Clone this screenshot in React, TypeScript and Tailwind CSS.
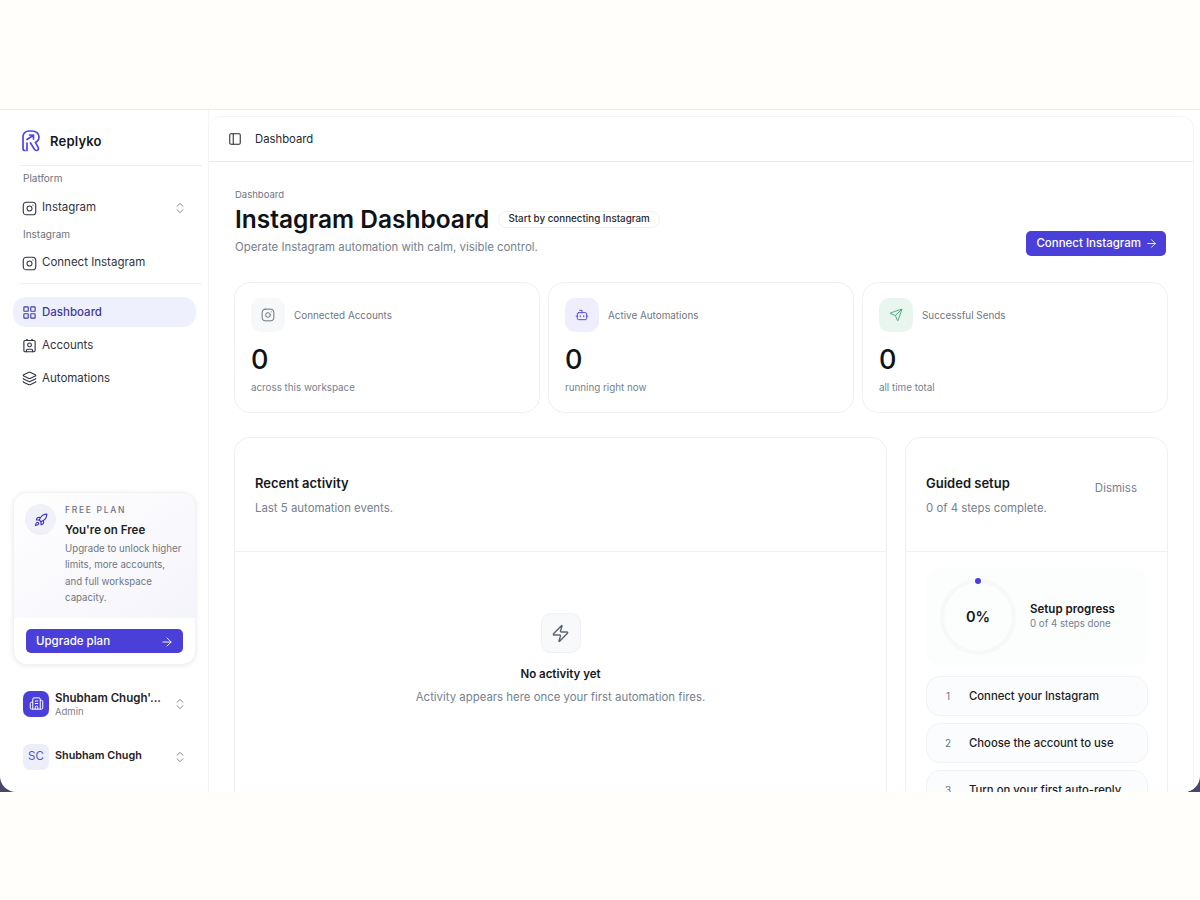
import { ArrowRight, Bot, Building2, ChevronsUpDown, Contact, Instagram, Layers, LayoutGrid, PanelLeft, Rocket, Send, Zap } from 'lucide-react';

const font = { fontFamily: 'Inter, sans-serif' };

function ReplykoLogo() {
	return (
		<svg width="18" height="22" viewBox="0 0 18 22" fill="none" stroke="#4f46e5" strokeWidth="1.7" strokeLinecap="round" strokeLinejoin="round">
			<path d="M3 20.5c-1.2 0-2-.8-2-2V6.5C1 3.2 3.6 1 6.8 1h3.4C14 1 17 3.6 17 7c0 2.6-1.4 4.4-3.6 5.3l2.8 5c.8 1.500-.2 3.200-1.800 3.200-.9 0-1.500-.4-2-1.300L8.500 13" />
			<path d="M5 20.500V13" />
			<path d="M5 9.500l6-4M7.500 5h4v4" />
		</svg>
	);
}

// ─── Sidebar ──────────────────────────────────────────────────────────────────

function NavRow({ icon, label, active }: { icon: React.ReactNode; label: string; active?: boolean }) {
	return (
		<div
			className={`flex items-center gap-[5px] h-[30px] pt-[1px] pl-[9px] mr-[12px] rounded-[13px] text-[11.5px] ${
				active ? 'bg-[#eff0fd] text-[#3f3a9e] font-medium' : 'text-[#30343f]'
			}`}
		>
			{icon}
			{label}
		</div>
	);
}

function Sidebar() {
	return (
		<aside className="w-[209px] shrink-0 flex flex-col pl-[13px] border-r border-[#f3f4f6]">
			<div className="flex items-start gap-[10px] h-[55px] pt-[20px] ml-[9px]">
				<ReplykoLogo />
				<span className="text-[13px] leading-[22px] font-semibold text-[#16181d] tracking-[0.2px]">Replyko</span>
			</div>
			<div className="h-px bg-[#eceef1] ml-[6px] mr-[6px]" />
			<div className="text-[10px] text-[#6b7280] ml-[10px] mt-[6px] leading-[12px]">Platform</div>
			<div className="flex items-center gap-[5px] ml-[9px] mt-[14px] h-[20px] text-[11.5px] text-[#30343f]">
				<Instagram size={15} strokeWidth={1.8} />
				<span className="flex-1">Instagram</span>
				<ChevronsUpDown size={14} strokeWidth={1.5} className="mr-[21px] text-[#6b7280]" />
			</div>
			<div className="text-[10px] text-[#6b7280] ml-[10px] mt-[10px] leading-[12px]">Instagram</div>
			<div className="flex items-center gap-[5px] ml-[9px] mt-[13px] h-[20px] text-[11.5px] text-[#30343f]">
				<Instagram size={15} strokeWidth={1.8} />
				Connect Instagram
			</div>
			<div className="h-px bg-[#f1f2f4] ml-[6px] mr-[6px] mt-[10px]" />
			<div className="flex flex-col gap-[3px] mt-[13px]">
				<NavRow active icon={<LayoutGrid size={15} strokeWidth={1.8} />} label="Dashboard" />
				<NavRow icon={<Contact size={15} strokeWidth={1.8} />} label="Accounts" />
				<NavRow icon={<Layers size={15} strokeWidth={1.8} />} label="Automations" />
			</div>

			<div className="mt-[99px] mr-[12px] rounded-[14px] bg-white border border-[#f1f2f5] shadow-[0_1px_5px_rgba(30,30,60,0.09)] overflow-hidden">
				<div className="flex gap-[9px] pl-[11px] pt-[11px] h-[125px] bg-gradient-to-br from-white to-[#f4f4fb]">
					<div className="w-[31px] h-[31px] shrink-0 rounded-full bg-[#eff0f8] flex items-center justify-center">
						<Rocket size={14} className="text-[#4338ca]" />
					</div>
					<div className="w-[119px] shrink-0">
						<div className="text-[8.5px] font-medium tracking-[0.2em] text-[#6b7280] leading-[13px]">FREE PLAN</div>
						<div className="text-[11.5px] font-semibold text-[#1c1e26] mt-[5px] leading-[16px] whitespace-nowrap">You&apos;re on Free</div>
						<div className="text-[9.7px] text-[#71767f] leading-[16.4px] mt-[3px]">
							Upgrade to unlock higher limits, more accounts, and full workspace capacity.
						</div>
					</div>
				</div>
				<div className="px-[12px] pt-[11px] pb-[11px]">
					<div className="h-[24px] pt-[1px] rounded-[5px] bg-[#4a3fd9] text-white text-[11.5px] font-medium flex items-center justify-between pl-[10px] pr-[9px]">
						Upgrade plan
						<ArrowRight size={14} strokeWidth={1.6} />
					</div>
				</div>
			</div>

			<div className="flex items-center mt-[25px] ml-[10px] h-[27px]">
				<div className="w-[26px] h-[26px] rounded-[7px] bg-[#4a3fd9] flex items-center justify-center text-white">
					<Building2 size={15} strokeWidth={1.6} />
				</div>
				<div className="ml-[6px] pt-[1px] flex-1">
					<div className="text-[11.5px] font-semibold text-[#1f2128] leading-[14px]">Shubham Chugh&apos;...</div>
					<div className="text-[9.5px] text-[#7b808a] leading-[13px]">Admin</div>
				</div>
				<ChevronsUpDown size={14} strokeWidth={1.5} className="mr-[21px] text-[#6b7280]" />
			</div>
			<div className="flex items-center mt-[26px] ml-[10px] h-[27px]">
				<div className="w-[26px] h-[26px] rounded-[7px] bg-[#eceefa] flex items-center justify-center text-[11.5px] text-[#5a54c8]">SC</div>
				<div className="ml-[6px] flex-1 text-[10.8px] font-semibold text-[#1f2128]">Shubham Chugh</div>
				<ChevronsUpDown size={14} strokeWidth={1.5} className="mr-[21px] text-[#6b7280]" />
			</div>
		</aside>
	);
}

// ─── Main ─────────────────────────────────────────────────────────────────────

function StatCard({ icon, tint, label, note }: { icon: React.ReactNode; tint: string; label: string; note: string }) {
	return (
		<div className="flex-1 h-[131px] rounded-[16px] border border-[#eff0f3] pl-[16px] pt-[15px]">
			<div className="flex items-center gap-[9px]">
				<div className={`w-[34px] h-[34px] rounded-[10px] flex items-center justify-center ${tint}`}>{icon}</div>
				<span className="text-[9.9px] text-[#6f7582]">{label}</span>
			</div>
			<div className="text-[27px] font-medium text-[#101216] leading-[30px] mt-[13px]">0</div>
			<div className="text-[9.8px] text-[#76808f] mt-[6px] leading-[14px]">{note}</div>
		</div>
	);
}

function Step({ n, label }: { n: number; label: string }) {
	return (
		<div className="flex items-center h-[40px] shrink-0 rounded-[14px] border border-[#f1f2f5] bg-[#fbfcfd]">
			<div className="w-[42px] text-center text-[10px] text-[#6b7280]">{n}</div>
			<span className="text-[11.3px] font-medium text-[#1c1e26]">{label}</span>
		</div>
	);
}

function Main() {
	return (
		<main className="flex-1 min-w-0 flex flex-col mt-[6px] mr-[6px] bg-white rounded-t-[12px] border-t border-r border-[#f3f4f6]">
			<div className="flex items-center h-[45px] shrink-0 pl-[19px] gap-[13px] border-b border-[#e8e9ed] text-[11.3px] text-[#262932]">
				<PanelLeft size={14} strokeWidth={1.8} />
				Dashboard
			</div>
			<div className="pl-[25px] pr-[25px] flex-1 min-h-0 flex flex-col">
				<div className="flex items-end justify-between mt-[27px]">
					<div className="pl-[1px] pb-[1px]">
						<div className="text-[9.5px] text-[#6f7582] leading-[12px]">Dashboard</div>
						<div className="flex items-center gap-[9px] mt-[2px]">
							<h1 className="text-[24.5px] font-semibold text-[#101216] leading-[33px]">Instagram Dashboard</h1>
							<span className="h-[17px] flex items-center rounded-full border border-[#eeeff3] px-[9px] text-[9.8px] font-medium text-[#262932]">
								Start by connecting Instagram
							</span>
						</div>
						<p className="text-[11.4px] text-[#76808f] leading-[16px] mt-[3px]">Operate Instagram automation with calm, visible control.</p>
					</div>
					<div className="h-[25px] mr-[2px] flex items-center gap-[4px] rounded-[5px] bg-[#4a3fd9] text-white text-[11.5px] font-medium pl-[10px] pr-[8px]">
						Connect Instagram
						<ArrowRight size={13} strokeWidth={1.6} />
					</div>
				</div>

				<div className="flex gap-[8px] mt-[26px]">
					<StatCard tint="bg-[#f7f8fa]" icon={<Instagram size={14} strokeWidth={1.7} className="text-[#6b7280]" />} label="Connected Accounts" note="across this workspace" />
					<StatCard tint="bg-[#efeefc]" icon={<Bot size={14} strokeWidth={1.7} className="text-[#4f46e5]" />} label="Active Automations" note="running right now" />
					<StatCard tint="bg-[#e9f6f0]" icon={<Send size={14} strokeWidth={1.7} className="text-[#4fae85]" />} label="Successful Sends" note="all time total" />
				</div>

				<div className="flex gap-[18px] mt-[24px] flex-1 min-h-0">
					<section className="flex-1 min-w-0 rounded-t-[16px] border border-b-0 border-[#eff0f3] flex flex-col">
						<div className="h-[114px] shrink-0 border-b border-[#eff0f3] pl-[20px] pt-[36px]">
							<h2 className="text-[13px] font-semibold text-[#16181d] leading-[18px]">Recent activity</h2>
							<p className="text-[11.4px] text-[#76808f] mt-[9px] leading-[14px]">Last 5 automation events.</p>
						</div>
						<div className="flex flex-col items-center pt-[61px]">
							<div className="w-[40px] h-[40px] rounded-[10px] bg-[#f8f9fb] border border-[#f0f1f4] flex items-center justify-center">
								<Zap size={19} strokeWidth={1.8} className="text-[#5d6472]" />
							</div>
							<div className="text-[11.5px] font-semibold text-[#16181d] mt-[14px] leading-[14px]">No activity yet</div>
							<div className="text-[11.4px] text-[#76808f] mt-[9px] leading-[14px]">Activity appears here once your first automation fires.</div>
						</div>
					</section>

					<section className="w-[263px] shrink-0 rounded-t-[16px] border border-b-0 border-[#eff0f3] flex flex-col overflow-hidden">
						<div className="h-[114px] shrink-0 border-b border-[#eff0f3] pl-[20px] pr-[30px] pt-[36px]">
							<div className="flex justify-between items-start">
								<h2 className="text-[13px] font-semibold text-[#16181d] leading-[18px]">Guided setup</h2>
								<span className="text-[11.5px] text-[#76808f] mt-[7px] leading-[14px]">Dismiss</span>
							</div>
							<p className="text-[11.4px] text-[#76808f] mt-[6px] leading-[14px]">0 of 4 steps complete.</p>
						</div>
						<div className="flex flex-col gap-[7px] pl-[20px] pr-[19px] pt-[16px]">
							<div className="flex items-center h-[97px] shrink-0 rounded-[14px] bg-[#fcfdfd] mb-[4px]">
								<svg width="80" height="80" viewBox="0 0 80 80" className="ml-[12px] shrink-0">
									<circle cx="40" cy="40" r="36" fill="none" stroke="#f7f8f9" strokeWidth="4" />
									<circle cx="40" cy="4" r="3" fill="#4a3fd9" />
									<text x="40" y="45" textAnchor="middle" fontSize="14.5" fontWeight="600" fill="#16181d">0%</text>
								</svg>
								<div className="ml-[12px]">
									<div className="text-[11.5px] font-semibold text-[#16181d] leading-[14px]">Setup progress</div>
									<div className="text-[9.7px] text-[#76808f] leading-[14px] mt-[1px]">0 of 4 steps done</div>
								</div>
							</div>
							<Step n={1} label="Connect your Instagram" />
							<Step n={2} label="Choose the account to use" />
							<Step n={3} label="Turn on your first auto-reply" />
						</div>
					</section>
				</div>
			</div>
		</main>
	);
}

export default function App() {
	return (
		<div className="w-[1200px] h-[900px] bg-[#fffefb] flex flex-col overflow-hidden" style={font}>
			<div className="h-[110px] shrink-0 border-b border-[#f8e8dc]" />
			<div className="h-[682px] shrink-0 bg-[#4a4668]">
				<div className="h-full bg-white rounded-b-[16px] flex overflow-hidden">
					<Sidebar />
					<Main />
				</div>
			</div>
		</div>
	);
}
